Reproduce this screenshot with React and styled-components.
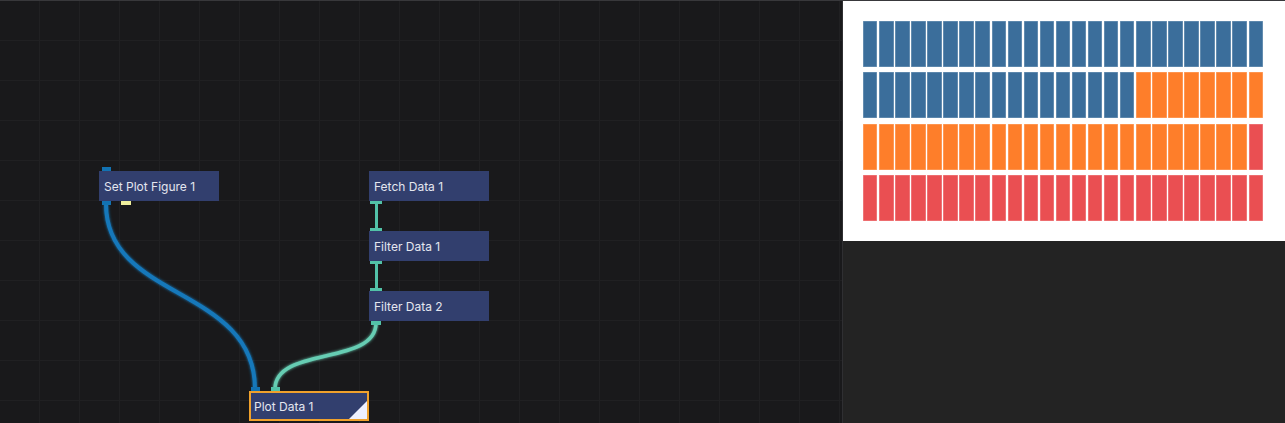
import React from 'react'
import styled, { createGlobalStyle } from 'styled-components'

const GlobalStyle = createGlobalStyle`
  html, body { margin: 0; padding: 0; background: #19191b; }
  body { font-family: Inter, "Noto Sans", sans-serif; overflow: hidden; }
`

const Page = styled.div`
  display: flex;
  width: 1285px;
  height: 423px;
  border-top: 1px solid #38383b;
  box-sizing: border-box;
  overflow: hidden;
`

const Canvas = styled.div`
  position: relative;
  width: 842px;
  height: 100%;
  flex: none;
  background-color: #19191b;
  background-image:
    linear-gradient(to right, #202022 1px, transparent 1px),
    linear-gradient(to bottom, #202022 1px, transparent 1px);
  background-size: 40px 40px;
  background-position: -1px -1px;
  border-right: 1px solid #2f2f32;
  overflow: hidden;
`

const Edges = styled.svg`
  position: absolute;
  inset: 0;
  width: 100%;
  height: 100%;
  pointer-events: none;
`

const Node = styled.div`
  position: absolute;
  box-sizing: border-box;
  width: 120px;
  height: 30px;
  display: flex;
  align-items: center;
  padding-left: ${p => (p.$selected ? '3px' : '5px')};
  background: #323f6e;
  color: #e4e6ef;
  font-size: 12px;
  border: ${p => (p.$selected ? '2px solid #f0a12c' : 'none')};
  white-space: nowrap;
`

const Corner = styled.div`
  position: absolute;
  right: 0;
  bottom: 0;
  width: 0;
  height: 0;
  border-style: solid;
  border-width: 0 0 18px 18px;
  border-color: transparent transparent #eef0ff transparent;
`

const Port = styled.div`
  position: absolute;
  height: 4px;
  width: ${p => p.$w || 9}px;
  background: ${p => p.$color};
`

const Side = styled.div`
  flex: 1;
  background: #232323;
  display: flex;
  flex-direction: column;
`

const Figure = styled.div`
  background: #ffffff;
  height: 240px;
  box-sizing: border-box;
  padding: 20px 20px 20px 20px;
`

const Waffle = styled.div`
  display: grid;
  grid-template-columns: repeat(25, 1fr);
  grid-template-rows: repeat(4, 1fr);
  column-gap: 1.6px;
  row-gap: 5.3px;
  width: 400px;
  height: 200px;
`

const Cell = styled.div`
  background: ${p => p.$color};
  box-shadow: inset 0 0 0 0.6px rgba(255, 255, 255, 0.35);
`

const BLUE = '#3b6e9b'
const ORANGE = '#fe7e2a'
const RED = '#ea4f52'

const cells = [
  ...Array(42).fill(BLUE),
  ...Array(32).fill(ORANGE),
  ...Array(26).fill(RED),
]

const nodes = [
  { id: 'fig', label: 'Set Plot Figure 1', x: 99, y: 170 },
  { id: 'fetch', label: 'Fetch Data 1', x: 369, y: 170 },
  { id: 'f1', label: 'Filter Data 1', x: 369, y: 230 },
  { id: 'f2', label: 'Filter Data 2', x: 369, y: 290 },
  { id: 'plot', label: 'Plot Data 1', x: 249, y: 390, selected: true },
]

const ports = [
  { x: 102, y: 166, c: '#1272b2' },
  { x: 102, y: 200, c: '#1272b2' },
  { x: 121, y: 200, c: '#efef9c', w: 10 },
  { x: 370, y: 200, c: '#52c2a8', w: 12, h: 3 },
  { x: 370, y: 227, c: '#52c2a8', w: 12, h: 3 },
  { x: 370, y: 260, c: '#52c2a8', w: 12, h: 3 },
  { x: 370, y: 287, c: '#52c2a8', w: 12, h: 3 },
  { x: 371, y: 320, c: '#52c2a8', w: 10 },
  { x: 251, y: 386, c: '#1272b2' },
  { x: 271, y: 386, c: '#52c2a8' },
]

export default function App() {
  return (
    <>
      <GlobalStyle />
      <Page>
        <Canvas>
          <Edges>
            <defs>
              <filter id="glow" x="-20%" y="-20%" width="140%" height="140%">
                <feGaussianBlur stdDeviation="1.6" result="b" />
                <feMerge>
                  <feMergeNode in="b" />
                  <feMergeNode in="SourceGraphic" />
                </feMerge>
              </filter>
            </defs>
            <path
              d="M106 203 C106 300, 255 285, 255 388"
              fill="none"
              stroke="#1478ba"
              strokeWidth="4"
              filter="url(#glow)"
            />
            <path
              d="M376 322 C376 365, 275 345, 275 388"
              fill="none"
              stroke="#66cdb3"
              strokeWidth="3.5"
              filter="url(#glow)"
            />
            <line x1="376.5" y1="203" x2="376.5" y2="228" stroke="#52c2a8" strokeWidth="3" />
            <line x1="376.5" y1="263" x2="376.5" y2="288" stroke="#52c2a8" strokeWidth="3" />
          </Edges>
          {nodes.map(n => (
            <Node key={n.id} $selected={n.selected} style={{ left: n.x, top: n.y }}>
              {n.label}
              {n.selected && <Corner />}
            </Node>
          ))}
          {ports.map((p, i) => (
            <Port key={i} $color={p.c} $w={p.w} style={{ left: p.x, top: p.y, height: p.h || 4 }} />
          ))}
        </Canvas>
        <Side>
          <Figure>
            <Waffle>
              {cells.map((c, i) => (
                <Cell key={i} $color={c} />
              ))}
            </Waffle>
          </Figure>
        </Side>
      </Page>
    </>
  )
}
